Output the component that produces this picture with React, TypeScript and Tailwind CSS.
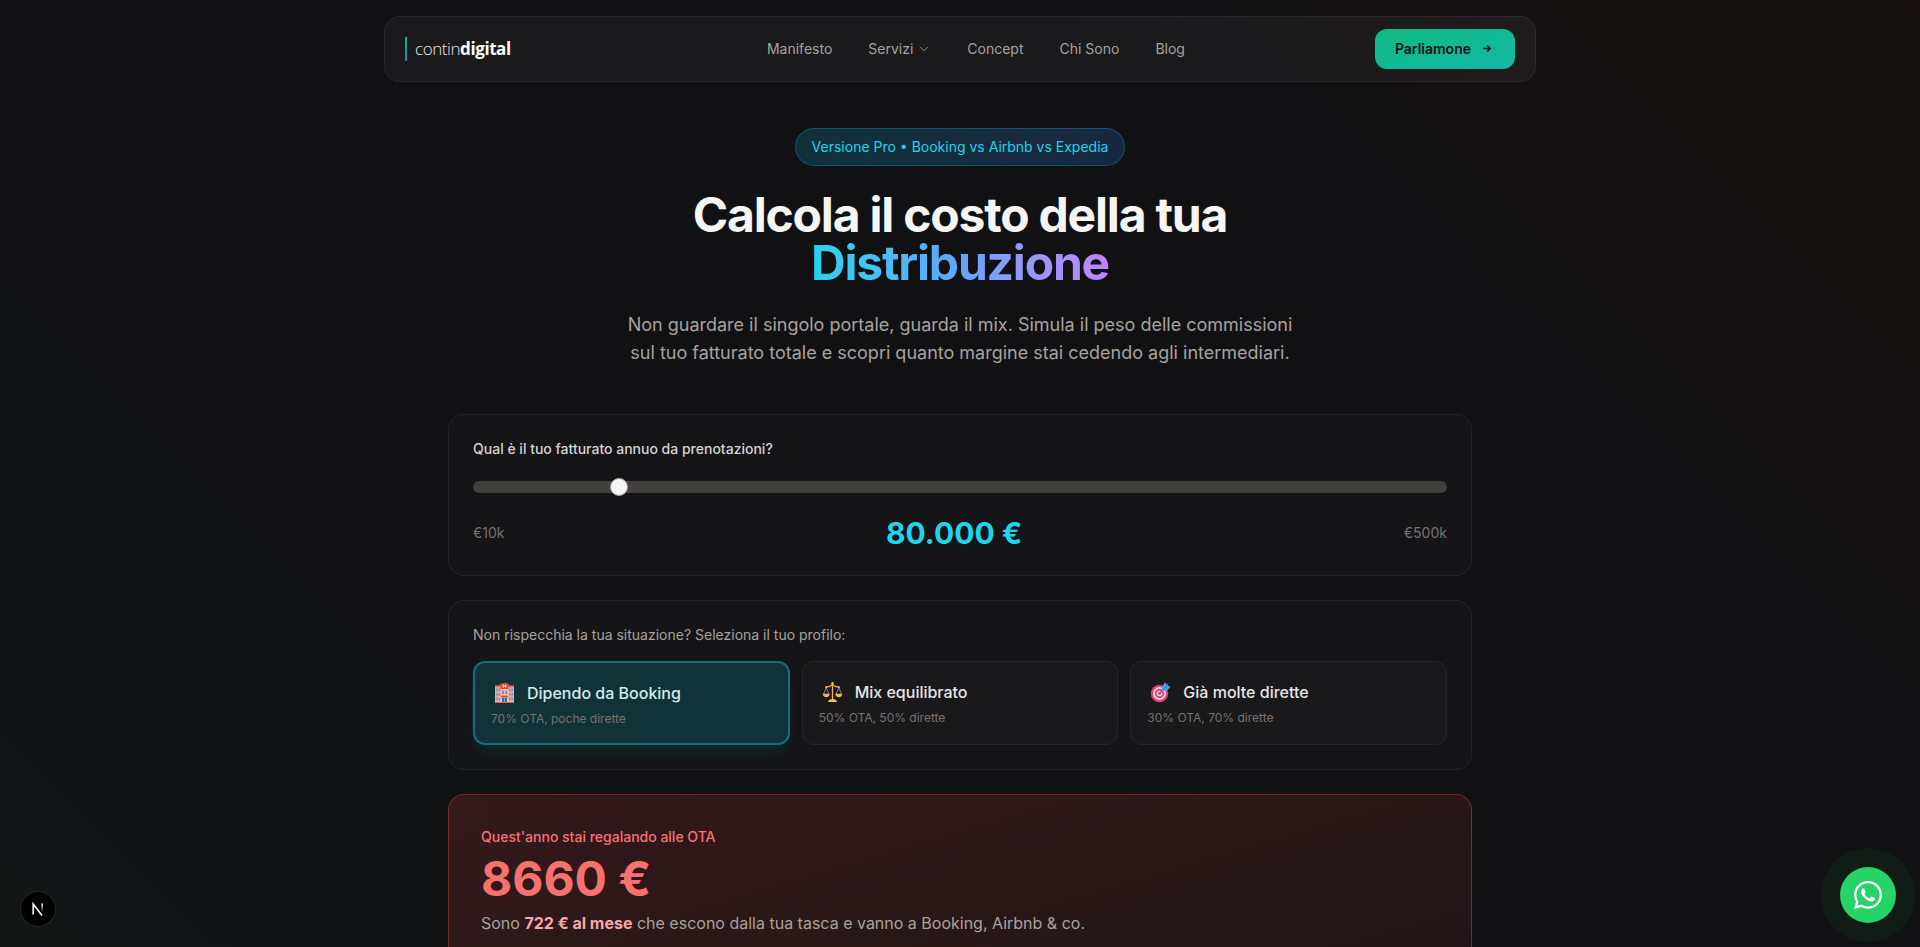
import { FC, useState } from "react";
import { FaWhatsapp } from "react-icons/fa";
import { LuChevronDown } from "react-icons/lu";

const navLinks = [
  { id: "manifesto", text: "Manifesto" },
  { id: "servizi", text: "Servizi", hasMenu: true },
  { id: "concept", text: "Concept" },
  { id: "chi-sono", text: "Chi Sono" },
  { id: "blog", text: "Blog" },
];

const HotelIcon: FC = () => (
  <svg className="size-6 shrink-0" viewBox="0 0 24 24" aria-hidden="true">
    <rect x="4" y="5" width="19" height="17" fill="#f6a896" />
    <rect x="4" y="4.4" width="6" height="1.8" fill="#e5684f" />
    <rect x="17" y="4.4" width="6" height="1.8" fill="#e5684f" />
    <rect x="9.5" y="3" width="8" height="19" fill="#fbc0ad" />
    <path d="M9.5 3.6 11 2h5l1.5 1.6V8h-8z" fill="#dc4438" />
    <path d="M12.2 3.6v3M14.8 3.6v3M12.2 5.1h2.6" stroke="#fff" strokeWidth="0.9" />
    <g fill="#4f9bd0">
      <rect x="5.2" y="7.6" width="1.5" height="2.6" />
      <rect x="7.6" y="7.6" width="1.5" height="2.6" />
      <rect x="5.2" y="12" width="1.5" height="2.6" />
      <rect x="7.6" y="12" width="1.5" height="2.6" />
      <rect x="5.2" y="16.6" width="1.5" height="2.6" />
      <rect x="7.6" y="16.6" width="1.5" height="2.6" />
      <rect x="18" y="7.6" width="1.5" height="2.6" />
      <rect x="20.4" y="7.6" width="1.5" height="2.6" />
      <rect x="18" y="12" width="1.5" height="2.6" />
      <rect x="20.4" y="12" width="1.5" height="2.6" />
      <rect x="18" y="16.6" width="1.5" height="2.6" />
      <rect x="20.4" y="16.6" width="1.5" height="2.6" />
      <rect x="10.8" y="9.6" width="2" height="3.4" />
      <rect x="14.2" y="9.6" width="2" height="3.4" />
    </g>
    <rect x="10" y="14.6" width="7" height="1.6" fill="#dc4438" />
    <rect x="11" y="16.6" width="5" height="5.4" fill="#2c6ea3" />
    <path d="M13.5 16.6V22" stroke="#fbc0ad" strokeWidth="0.6" />
    <rect x="4" y="21" width="19" height="1" fill="#c9705f" />
  </svg>
);

const ScalesIcon: FC = () => (
  <svg className="size-6 shrink-0" viewBox="0 0 24 24" fill="none" aria-hidden="true">
    <path d="M13.5 4v15.5" stroke="#f2b63f" strokeWidth="1.3" />
    <path d="M6.5 7.2c2.4 0 4.4-.6 7-2.4 2.6 1.8 4.600 2.400 7 2.400" stroke="#f2b63f" strokeWidth="1.300" />
    <path d="M7.200 7.500 4.600 14M7.200 7.500 9.900 14M19.800 7.500 17.100 14M19.800 7.500 22.400 14" stroke="#b9a6c8" strokeWidth="0.7" />
    <circle cx="13.500" cy="3.300" r="1.200" fill="#f7c552" />
    <circle cx="7.200" cy="7.200" r="0.900" fill="#f7c552" />
    <circle cx="19.800" cy="7.200" r="0.900" fill="#f7c552" />
    <path d="M3.800 13.800h6.900c0 2.300-1.500 3.500-3.450 3.500s-3.450-1.200-3.450-3.500zM16.300 13.800h6.900c0 2.300-1.500 3.500-3.450 3.500s-3.450-1.200-3.450-3.500z" fill="#f5b453" />
    <path d="M9 22c0-2 2-3 4.500-3s4.500 1 4.500 3z" fill="#f0c23c" />
  </svg>
);

const TargetIcon: FC = () => (
  <svg className="size-6 shrink-0" viewBox="0 0 24 24" fill="none" aria-hidden="true">
    <circle cx="12.500" cy="13.500" r="8.700" fill="#de4277" />
    <circle cx="12.500" cy="13.500" r="6.500" fill="#f6d3de" />
    <circle cx="12.500" cy="13.500" r="4.700" fill="#de4277" />
    <circle cx="12.500" cy="13.500" r="2.800" fill="#f6d3de" />
    <circle cx="12.500" cy="13.500" r="1.400" fill="#de4277" />
    <path d="M12.500 13.500 19 7" stroke="#5b6472" strokeWidth="1.100" />
    <path d="m15 10.800-.300-3.600L18.300 2l1 2.800 1.800-1.400-.400 2.400 3 .900-4.300 4z" fill="#42a5f5" />
    <path d="m16.200 9.600 4.300-4.300" stroke="#1e78c8" strokeWidth="0.900" />
  </svg>
);

const profiles = [
  { id: "booking", Icon: HotelIcon, title: "Dipendo da Booking", text: "70% OTA, poche dirette" },
  { id: "mix", Icon: ScalesIcon, title: "Mix equilibrato", text: "50% OTA, 50% dirette" },
  { id: "dirette", Icon: TargetIcon, title: "Già molte dirette", text: "30% OTA, 70% dirette" },
];

const formatEuro = (value: number) =>
  `${String(value).replace(/\B(?=(\d{3})+$)/g, ".")} €`;

const Logo: FC = () => (
  <a href="#" className="flex items-center gap-2 md:w-[172px]">
    <span className="h-6 w-0.5 bg-gradient-to-b from-[#10b981] to-[#0891b2]" />
    <span className="font-['Open_Sans','Noto_Sans',sans-serif] text-[17px] leading-6 font-light tracking-tight text-stone-200">
      contin<span className="font-bold text-white">digital</span>
    </span>
  </a>
);

const Nav: FC = () => (
  <header className="px-4 pt-4">
    <nav className="mx-auto flex h-[66px] max-w-6xl items-center justify-between rounded-2xl border border-white/6 bg-white/4 px-5">
      <Logo />
      <div className="hidden items-center gap-9 md:flex">
        {navLinks.map(({ id, text, hasMenu }) =>
          hasMenu ? (
            <button key={id} type="button" className="flex items-center gap-1 text-sm text-[#a8a29e]">
              {text}
              <LuChevronDown className="size-3.5" strokeWidth={1.5} />
            </button>
          ) : (
            <a key={id} href={`#${id}`} className="text-sm text-[#a8a29e]">
              {text}
            </a>
          )
        )}
      </div>
      <a
        href="#contatti"
        className="flex h-10 items-center gap-2 rounded-xl bg-gradient-to-br from-[#10b981] to-[#14b8a6] px-5 text-sm font-semibold text-[#111113]"
      >
        Parliamone
        <svg className="size-4" viewBox="0 0 16 16" fill="none" stroke="currentColor" strokeWidth="1.6">
          <path d="M4.500 7.500h6.500M8.200 4.500l3 3-3 3" />
        </svg>
      </a>
    </nav>
  </header>
);

const Hero: FC = () => (
  <section className="flex flex-col items-center text-center">
    <div className="rounded-full border border-[#06b6d4]/30 bg-gradient-to-r from-[#06b6d4]/20 to-[#3b82f6]/20 px-4 py-2 text-sm text-[#22d3ee]">
      Versione Pro • Booking vs Airbnb vs Expedia
    </div>
    <h1 className="mt-[25px] text-5xl leading-12 font-bold tracking-tight text-stone-100">
      Calcola il costo della tua
      <br />
      <span className="bg-gradient-to-r from-[#22d3ee] via-[#60a5fa] to-[#c084fc] bg-clip-text text-transparent">
        Distribuzione
      </span>
    </h1>
    <p className="mt-6 max-w-2xl text-lg leading-7 text-[#a8a29e]">
      Non guardare il singolo portale, guarda il mix. Simula il peso delle
      commissioni sul tuo fatturato totale e scopri quanto margine stai cedendo
      agli intermediari.
    </p>
  </section>
);

const Revenue: FC = () => {
  const [revenue, setRevenue] = useState(80000);

  return (
    <section className="rounded-2xl border border-white/6 bg-white/2 p-6">
      <label htmlFor="revenue" className="block text-sm font-medium text-stone-300">
        Qual è il tuo fatturato annuo da prenotazioni?
      </label>
      <input
        id="revenue"
        type="range"
        min={10000}
        max={500000}
        step={5000}
        value={revenue}
        onChange={(e) => setRevenue(Number(e.target.value))}
        className="mt-[22px] block h-3 w-full cursor-pointer appearance-none rounded-lg bg-[#41403c] [&::-webkit-slider-thumb]:size-4.5 [&::-webkit-slider-thumb]:appearance-none [&::-webkit-slider-thumb]:rounded-full [&::-webkit-slider-thumb]:border [&::-webkit-slider-thumb]:border-stone-400 [&::-webkit-slider-thumb]:bg-stone-100"
      />
      <div className="mt-[22px] flex items-center justify-between text-sm text-[#78716c]">
        <span>€10k</span>
        <span className="text-3xl leading-9 font-bold text-[#22d3ee]">
          {formatEuro(revenue)}
        </span>
        <span>€500k</span>
      </div>
    </section>
  );
};

const Profiles: FC = () => {
  const [active, setActive] = useState("booking");

  return (
    <section className="rounded-2xl border border-white/6 bg-white/2 p-6">
      <p className="text-sm text-[#a8a29e]">
        Non rispecchia la tua situazione? Seleziona il tuo profilo:
      </p>
      <div className="mt-4 grid gap-3 md:grid-cols-3">
        {profiles.map(({ id, Icon, title, text }) => (
          <button
            key={id}
            type="button"
            aria-pressed={active === id}
            onClick={() => setActive(id)}
            className={
              active === id
                ? "flex flex-col gap-1 rounded-xl border-2 border-[#176d7c] bg-[#12323a] p-4 text-left shadow-lg shadow-[#06b6d4]/10"
                : "flex flex-col gap-1 rounded-xl border border-white/5 bg-white/2 p-4 text-left"
            }
          >
            <span className="flex h-7 items-center gap-3">
              <Icon />
              <span className={active === id ? "font-medium text-[#d5e9ed]" : "font-medium text-stone-200"}>
                {title}
              </span>
            </span>
            <span className="text-xs text-[#78716c]">{text}</span>
          </button>
        ))}
      </div>
    </section>
  );
};

const Loss: FC = () => (
  <section className="rounded-2xl border border-[#ef4444]/40 bg-gradient-to-br from-[#ef4444]/16 to-[#ef4444]/5 p-8 pb-40">
    <p className="text-sm font-medium text-[#f87171]">Quest'anno stai regalando alle OTA</p>
    <p className="mt-2 text-5xl leading-12 font-bold text-[#f87171]">8660 €</p>
    <p className="mt-2 text-base text-[#a8a29e]">
      Sono <strong className="font-bold text-[#fca5a5]">722 € al mese</strong> che
      escono dalla tua tasca e vanno a Booking, Airbnb & co.
    </p>
  </section>
);

const FloatingButtons: FC = () => (
  <>
    <a
      href="#whatsapp"
      aria-label="WhatsApp"
      className="fixed right-6 bottom-6 flex size-14 items-center justify-center rounded-full bg-[#25d366] text-white ring-[19px] ring-[#25d366]/6"
    >
      <FaWhatsapp className="size-8" />
    </a>
    <button
      type="button"
      aria-label="Next.js"
      className="fixed bottom-5 left-5 flex size-9 items-center justify-center rounded-full border border-white/15 bg-black"
    >
      <svg width="14" height="14" viewBox="0 0 14 14" fill="none" strokeWidth="1.6">
        <defs>
          <linearGradient id="stem" x1="0" y1="0" x2="0" y2="1">
            <stop stopColor="#fff" />
            <stop offset="1" stopColor="#fff" stopOpacity="0" />
          </linearGradient>
        </defs>
        <path d="M2.200 12.500V2L11 13.500" stroke="#fff" />
        <rect x="10.400" y="1.500" width="1.600" height="9" fill="url(#stem)" />
      </svg>
    </button>
  </>
);

const App: FC = () => (
  <div className="h-screen overflow-hidden bg-[#111113] bg-[linear-gradient(45deg,#121716_0%,#111113_25%,#111113_70%,#181312_100%)] font-['Inter',sans-serif]">
    <Nav />
    <main className="mx-auto flex max-w-5xl flex-col gap-6 pt-[46px]">
      <div className="pb-[23px]">
        <Hero />
      </div>
      <Revenue />
      <Profiles />
      <Loss />
    </main>
    <FloatingButtons />
  </div>
);

export default App;
